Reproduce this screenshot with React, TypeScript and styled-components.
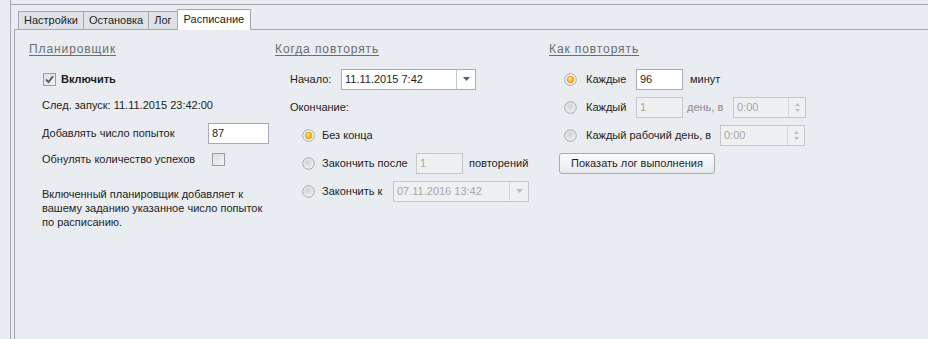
import React from 'react';
import styled, { createGlobalStyle, css } from 'styled-components';

const GlobalStyle = createGlobalStyle`
  html, body {
    margin: 0;
    padding: 0;
  }
  body {
    background: #e9ecf0;
    font-family: "Liberation Sans", Arial, sans-serif;
    font-size: 11px;
    color: #1e1e1e;
  }
`;

const Frame = styled.div`
  margin-left: 10px;
  height: 339px;
  border-left: 1px solid #a5a9ae;
  overflow: hidden;
`;

const TopPanel = styled.div`
  height: 4px;
  border-bottom: 1px solid #a5a9ae;
`;

const TabArea = styled.div`
  margin-left: 3px;
`;

const TabStrip = styled.div`
  display: flex;
  align-items: flex-end;
  height: 24px;
  padding-left: 5px;
`;

const Tab = styled.div<{ $active?: boolean }>`
  box-sizing: border-box;
  height: 18px;
  padding: 0 5px;
  margin-left: -1px;
  border: 1px solid #a5a9ae;
  border-bottom: none;
  background: #dfe3e8;
  line-height: 17px;
  color: #1e1e1e;
  white-space: nowrap;

  ${(p) =>
    p.$active &&
    css`
      position: relative;
      z-index: 1;
      height: 21px;
      margin-bottom: -1px;
      padding: 0 6px;
      background: #ffffff;
      line-height: 18px;
    `}
`;

const Panel = styled.div`
  display: flex;
  height: 320px;
  padding: 12px 0 0 14px;
  border-left: 1px solid #a5a9ae;
  border-top: 1px solid #a5a9ae;
`;

const Column = styled.div<{ $w?: number }>`
  display: flex;
  flex-direction: column;
  flex: ${(p) => (p.$w ? `0 0 ${p.$w}px` : '1 1 auto')};
`;

const Heading = styled.div`
  height: 14px;
  line-height: 14px;
  font-size: 12px;
  letter-spacing: 0.9px;
  color: #6b6e72;
  text-decoration: underline;
  text-underline-offset: 2px;
`;

const Row = styled.div<{ $mt: number; $indent: number }>`
  display: flex;
  align-items: center;
  height: 20px;
  margin-top: ${(p) => p.$mt}px;
  padding-left: ${(p) => p.$indent}px;
  white-space: nowrap;
`;

const Label = styled.span<{ $w?: number; $gap?: number; $muted?: boolean; $bold?: boolean }>`
  display: inline-block;
  ${(p) => p.$w && `width: ${p.$w}px;`}
  margin-left: ${(p) => p.$gap ?? 0}px;
  color: ${(p) => (p.$muted ? '#8a8d91' : '#1e1e1e')};
  font-weight: ${(p) => (p.$bold ? 700 : 400)};
`;

const Note = styled.p<{ $mt: number; $indent: number }>`
  margin: ${(p) => p.$mt}px 0 0;
  padding-left: ${(p) => p.$indent}px;
  line-height: 14px;
`;

const TextBox = styled.div<{ $w: number; $disabled?: boolean; $gap?: number }>`
  box-sizing: border-box;
  display: flex;
  align-items: center;
  width: ${(p) => p.$w}px;
  height: 21px;
  margin-left: ${(p) => p.$gap ?? 0}px;
  padding-left: 3px;
  border: 1px solid ${(p) => (p.$disabled ? '#c4c8cc' : '#a8adb3')};
  background: ${(p) => (p.$disabled ? '#eff0f2' : '#ffffff')};
  color: ${(p) => (p.$disabled ? '#a3a6aa' : '#1e1e1e')};
`;

const EditorValue = styled.span`
  flex: 1 1 auto;
`;

const SideButton = styled.div<{ $w: number; $disabled?: boolean }>`
  display: flex;
  flex-direction: column;
  align-items: center;
  justify-content: center;
  gap: 3px;
  align-self: stretch;
  width: ${(p) => p.$w}px;
  border-left: 1px solid ${(p) => (p.$disabled ? '#d3d6da' : '#c3c7cb')};
`;

const Check = styled.div<{ $gapLeft?: number }>`
  box-sizing: border-box;
  width: 13px;
  height: 13px;
  margin-left: ${(p) => p.$gapLeft ?? 0}px;
  border: 1px solid #9a9ea3;
  background: linear-gradient(135deg, #dcdedf 0%, #f4f4f4 100%);
  display: flex;
  align-items: center;
  justify-content: center;
`;

const PushButton = styled.div<{ $w: number; $indent: number; $mt: number }>`
  box-sizing: border-box;
  width: ${(p) => p.$w}px;
  height: 21px;
  margin-top: ${(p) => p.$mt}px;
  margin-left: ${(p) => p.$indent}px;
  border: 1px solid #a9adb2;
  border-radius: 3px;
  background: linear-gradient(#fafbfc, #e7e9ec);
  text-align: center;
  line-height: 19px;
`;

const Radio: React.FC<{ checked?: boolean }> = ({ checked }) => (
  <svg width="13" height="13" viewBox="0 0 13 13" style={{ flex: '0 0 13px' }}>
    <defs>
      <radialGradient id="rOff" cx="0.45" cy="0.4" r="0.6">
        <stop offset="0" stopColor="#cfd1d3" />
        <stop offset="1" stopColor="#f3f3f3" />
      </radialGradient>
      <radialGradient id="rOn" cx="0.4" cy="0.35" r="0.7">
        <stop offset="0" stopColor="#ffe27a" />
        <stop offset="1" stopColor="#eea200" />
      </radialGradient>
    </defs>
    <circle cx="6.5" cy="6.5" r="5.8" fill={checked ? '#f4f4f4' : 'url(#rOff)'} stroke="#a4a8ac" strokeWidth="1" />
    {checked && <circle cx="6.5" cy="6.5" r="3.4" fill="url(#rOn)" stroke="#d99100" strokeWidth="0.6" />}
  </svg>
);

const DownArrow: React.FC<{ muted?: boolean }> = ({ muted }) => (
  <svg width="7" height="4" viewBox="0 0 7 4">
    <polygon points="0,0 7,0 3.5,4" fill={muted ? '#b9bcc0' : '#5b5f63'} />
  </svg>
);

const UpArrow: React.FC = () => (
  <svg width="5" height="3" viewBox="0 0 5 3">
    <polygon points="0,3 5,3 2.5,0" fill="#b9bcc0" />
  </svg>
);

const SmallDown: React.FC = () => (
  <svg width="5" height="3" viewBox="0 0 5 3">
    <polygon points="0,0 5,0 2.5,3" fill="#b9bcc0" />
  </svg>
);

const Combo: React.FC<{ value: string; w: number; disabled?: boolean; gap?: number }> = ({ value, w, disabled, gap }) => (
  <TextBox $w={w} $disabled={disabled} $gap={gap}>
    <EditorValue>{value}</EditorValue>
    <SideButton $w={18} $disabled={disabled}>
      <DownArrow muted={disabled} />
    </SideButton>
  </TextBox>
);

const Spin: React.FC<{ value: string; w: number; gap?: number }> = ({ value, w, gap }) => (
  <TextBox $w={w} $disabled $gap={gap}>
    <EditorValue>{value}</EditorValue>
    <SideButton $w={16} $disabled>
      <UpArrow />
      <SmallDown />
    </SideButton>
  </TextBox>
);

const App: React.FC = () => {
  return (
    <>
      <GlobalStyle />
      <Frame>
        <TopPanel />
        <TabArea>
          <TabStrip>
            <Tab>Настройки</Tab>
            <Tab>Остановка</Tab>
            <Tab>Лог</Tab>
            <Tab $active>Расписание</Tab>
          </TabStrip>
          <Panel>
            <Column $w={246}>
              <Heading>Планировщик</Heading>
              <Row $mt={13} $indent={14}>
                <Check>
                  <svg width="9" height="9" viewBox="0 0 9 9">
                    <path d="M1 4.5 L3.5 7.2 L8 1.2" fill="none" stroke="#4d5054" strokeWidth="1.8" />
                  </svg>
                </Check>
                <Label $bold $gap={5}>Включить</Label>
              </Row>
              <Row $mt={6} $indent={13}>
                <Label>След. запуск: 11.11.2015 23:42:00</Label>
              </Row>
              <Row $mt={8} $indent={13}>
                <Label $w={166}>Добавлять число попыток</Label>
                <TextBox $w={61}>87</TextBox>
              </Row>
              <Row $mt={6} $indent={13}>
                <Label $w={170}>Обнулять количество успехов</Label>
                <Check />
              </Row>
              <Note $mt={18} $indent={13}>
                Включенный планировщик добавляет к
                <br />
                вашему заданию указанное число попыток
                <br />
                по расписанию.
              </Note>
            </Column>

            <Column $w={274}>
              <Heading>Когда повторять</Heading>
              <Row $mt={13} $indent={15}>
                <Label $w={51}>Начало:</Label>
                <Combo value="11.11.2015 7:42" w={135} />
              </Row>
              <Row $mt={8} $indent={15}>
                <Label>Окончание:</Label>
              </Row>
              <Row $mt={8} $indent={27}>
                <Radio checked />
                <Label $gap={7}>Без конца</Label>
              </Row>
              <Row $mt={8} $indent={27}>
                <Radio />
                <Label $gap={7} $w={94}>Закончить после</Label>
                <TextBox $w={47} $disabled>1</TextBox>
                <Label $gap={6}>повторений</Label>
              </Row>
              <Row $mt={8} $indent={27}>
                <Radio />
                <Label $gap={7} $w={71}>Закончить к</Label>
                <Combo value="07.11.2016 13:42" w={136} disabled />
              </Row>
            </Column>

            <Column>
              <Heading>Как повторять</Heading>
              <Row $mt={13} $indent={15}>
                <Radio checked />
                <Label $gap={9} $w={50}>Каждые</Label>
                <TextBox $w={47}>96</TextBox>
                <Label $gap={7}>минут</Label>
              </Row>
              <Row $mt={8} $indent={15}>
                <Radio />
                <Label $gap={9} $w={50}>Каждый</Label>
                <TextBox $w={47} $disabled>1</TextBox>
                <Label $gap={4} $w={46} $muted>день, в</Label>
                <Spin value="0:00" w={73} />
              </Row>
              <Row $mt={8} $indent={15}>
                <Radio />
                <Label $gap={9} $w={134}>Каждый рабочий день, в</Label>
                <Spin value="0:00" w={85} />
              </Row>
              <PushButton $w={156} $indent={10} $mt={8}>
                Показать лог выполнения
              </PushButton>
            </Column>
          </Panel>
        </TabArea>
      </Frame>
    </>
  );
};

export default App;
